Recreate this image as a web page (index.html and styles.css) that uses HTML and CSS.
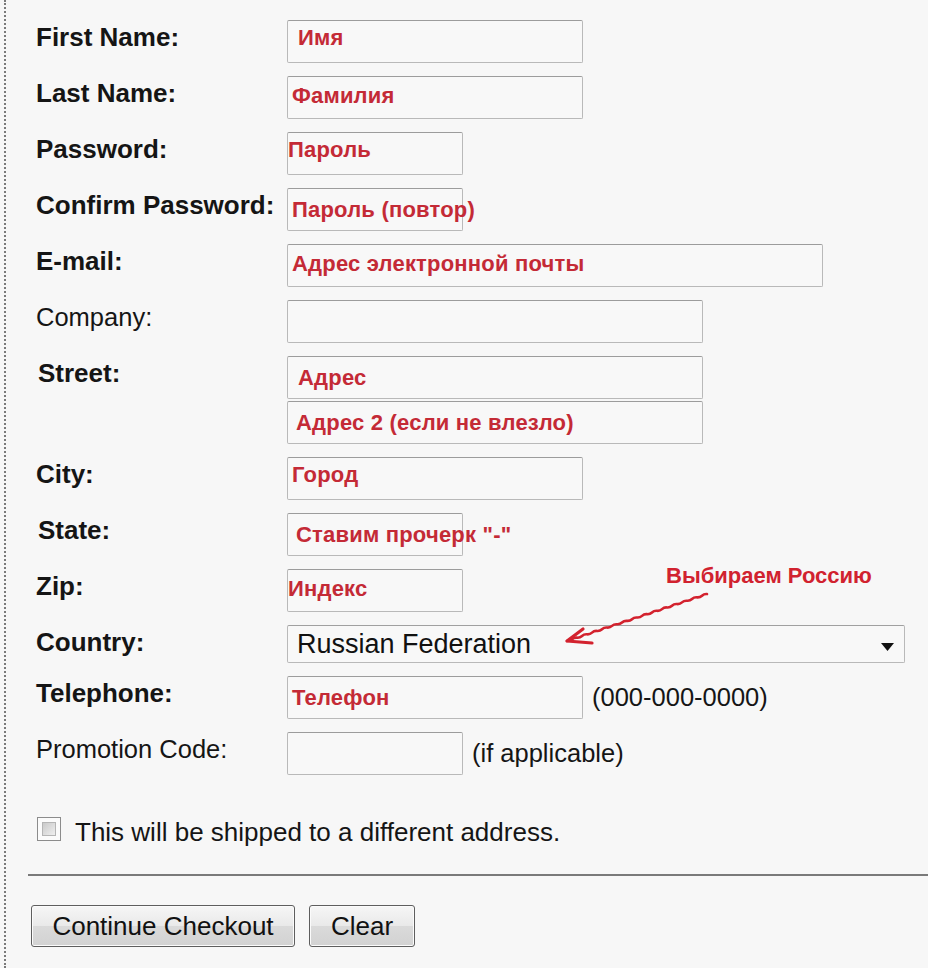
FILE: index.html
```html
<!DOCTYPE html>
<html lang="en">
<head>
<meta charset="utf-8">
<title>Checkout</title>
<link rel="stylesheet" href="styles.css">
</head>
<body>
<div class="page">
  <form class="form">
    <div class="fields">
      <div class="row">
        <div class="label">First Name:</div>
        <div class="field"><div class="box w296"><span class="note x10 hi">Имя</span></div></div>
      </div>
      <div class="row">
        <div class="label">Last Name:</div>
        <div class="field"><div class="box w296"><span class="note x4">Фамилия</span></div></div>
      </div>
      <div class="row">
        <div class="label">Password:</div>
        <div class="field"><div class="box w176"><span class="note x0 hi">Пароль</span></div></div>
      </div>
      <div class="row">
        <div class="label">Confirm Password:</div>
        <div class="field"><div class="box w176"><span class="note x4 lo">Пароль (повтор)</span></div></div>
      </div>
      <div class="row">
        <div class="label">E-mail:</div>
        <div class="field"><div class="box w536"><span class="note x4">Адрес электронной почты</span></div></div>
      </div>
      <div class="row">
        <div class="label light">Company:</div>
        <div class="field"><div class="box w416"></div></div>
      </div>
      <div class="row">
        <div class="label indent">Street:</div>
        <div class="field stack">
          <div class="box w416"><span class="note x10 lo">Адрес</span></div>
          <div class="box w416"><span class="note x8 lo">Адрес 2 (если не влезло)</span></div>
        </div>
      </div>
      <div class="row">
        <div class="label">City:</div>
        <div class="field"><div class="box w296"><span class="note x4 hi">Город</span></div></div>
      </div>
      <div class="row">
        <div class="label indent">State:</div>
        <div class="field"><div class="box w176"><span class="note x8 lo">Ставим прочерк "-"</span></div></div>
      </div>
      <div class="row">
        <div class="label">Zip:</div>
        <div class="field"><div class="box w176"><span class="note x0">Индекс</span></div></div>
      </div>
      <div class="row">
        <div class="label">Country:</div>
        <div class="field">
          <div class="select">
            <span>Russian Federation</span>
            <svg class="caret" width="13" height="8" viewBox="0 0 13 8"><path d="M0 0H13L6.5 8Z" fill="#111"/></svg>
          </div>
        </div>
      </div>
      <div class="row">
        <div class="label">Telephone:</div>
        <div class="field">
          <div class="box w296"><span class="note x4 lo">Телефон</span></div>
          <span class="suffix">(000-000-0000)</span>
        </div>
      </div>
      <div class="row">
        <div class="label light">Promotion Code:</div>
        <div class="field">
          <div class="box w176"></div>
          <span class="suffix">(if applicable)</span>
        </div>
      </div>
    </div>

    <label class="check-row">
      <span class="checkbox"><span class="checkbox-inner"></span></span>
      <span class="check-text">This will be shipped to a different address.</span>
    </label>

    <div class="rule"></div>

    <div class="buttons">
      <button type="button" class="btn btn-wide">Continue Checkout</button>
      <button type="button" class="btn btn-small">Clear</button>
    </div>
  </form>

  <div class="annotation">Выбираем Россию</div>
  <svg class="arrow" width="160" height="70" viewBox="0 0 160 70">
    <path d="M147 9 q-2.88 -0.3 -5 1.679 t-5 1.679 t-5 1.679 t-5 1.679 t-5 1.679 t-5 1.679 t-5 1.679 t-5 1.679 t-5 1.679 t-5 1.679 t-5 1.679 t-5 1.679 t-5 1.679 t-5 1.679 t-5 1.679 t-5 1.679 t-5 1.679 t-5 1.679 t-5 1.679 t-5 1.679 t-5 1.679 t-5 1.679 t-5 1.679 t-5 1.679 t-5 1.679 t-5 1.679 t-5 1.679 t-5 1.679" stroke="#d3222e" stroke-width="2.6" stroke-linecap="round" fill="none"/>
    <path d="M23 44 L7 56 L32 58" stroke="#d3222e" stroke-width="3.2" stroke-linecap="round" stroke-linejoin="round" fill="none"/>
  </svg>
</div>
</body>
</html>
```

FILE: styles.css
```css
* {
  box-sizing: border-box;
}

html,
body {
  margin: 0;
  background: #f7f7f7;
}

body {
  font-family: "Liberation Sans", Arial, sans-serif;
  color: #151515;
}

.page {
  position: relative;
  height: 968px;
  margin-left: 4px;
  border-left: 2px dotted #7a7a7a;
  padding-top: 20px;
  overflow: hidden;
}

.form {
  padding-left: 30px;
}

.fields {
  display: flex;
  flex-direction: column;
  gap: 13px;
}

.row {
  display: grid;
  grid-template-columns: 251px 1fr;
}

.label {
  font-size: 26px;
  font-weight: bold;
  line-height: 30px;
  padding-top: 2px;
  white-space: nowrap;
}

.label.light {
  font-weight: normal;
  font-size: 25.5px;
}

.label.indent {
  padding-left: 2px;
}

.field {
  display: flex;
  align-items: center;
}

.field.stack {
  flex-direction: column;
  align-items: flex-start;
  gap: 2px;
}

.box {
  height: 43px;
  border: 1px solid #b9b9b9;
  border-top-color: #9c9c9c;
  border-radius: 2px;
  background: #f8f8f8;
  white-space: nowrap;
}

.w176 { width: 176px; }
.w296 { width: 296px; }
.w416 { width: 416px; }
.w536 { width: 536px; }

.note {
  display: block;
  font-size: 22px;
  font-weight: bold;
  line-height: 22px;
  letter-spacing: 0.2px;
  color: #c42a36;
  padding-top: 8px;
}

.note.hi { padding-top: 6px; }
.note.lo { padding-top: 10px; }

.note.x0 { padding-left: 0; }
.note.x4 { padding-left: 4px; }
.note.x8 { padding-left: 8px; }
.note.x10 { padding-left: 10px; }

.select {
  width: 618px;
  height: 38px;
  border: 1px solid #b9b9b9;
  border-top-color: #a0a0a0;
  border-radius: 2px;
  background: #f8f8f8;
  display: flex;
  align-items: center;
  justify-content: space-between;
  padding: 1px 10px 0 9px;
  font-size: 27px;
  color: #111;
}

.caret {
  margin-top: 4px;
}

.suffix {
  margin-left: 9px;
  font-size: 25.5px;
  color: #151515;
  white-space: nowrap;
}

.check-row {
  display: flex;
  align-items: center;
  gap: 14px;
  height: 24px;
  margin-top: 42px;
  margin-left: 1px;
}

.checkbox {
  width: 24px;
  height: 24px;
  border: 1px solid #8c8c8c;
  background: #fbfbfb;
  padding: 4px;
  display: block;
  flex: none;
}

.checkbox-inner {
  display: block;
  width: 100%;
  height: 100%;
  border: 1px solid #b5b5b5;
  background: linear-gradient(135deg, #c9c9c9, #efefef);
}

.check-text {
  font-size: 26px;
  line-height: 24px;
  color: #151515;
  padding-top: 6px;
}

.rule {
  margin-top: 33px;
  margin-left: -8px;
  border-top: 2px solid #7a7a7a;
}

.buttons {
  display: flex;
  gap: 14px;
  margin-top: 29px;
  margin-left: -5px;
}

.btn {
  height: 42px;
  border: 1px solid #5e5e5e;
  border-radius: 3px;
  background: linear-gradient(#f6f6f6, #e9e9e9 50%, #dadada 51%, #d2d2d2);
  box-shadow: inset 0 0 0 1px #fbfbfb;
  font-family: "Liberation Sans", Arial, sans-serif;
  font-size: 26px;
  color: #111;
  padding: 0;
}

.btn-wide { width: 264px; }
.btn-small { width: 106px; }

.annotation {
  position: absolute;
  left: 660px;
  top: 564px;
  font-size: 22px;
  font-weight: bold;
  line-height: 24px;
  color: #d1222f;
  white-space: nowrap;
}

.arrow {
  position: absolute;
  left: 554px;
  top: 585px;
}
```
